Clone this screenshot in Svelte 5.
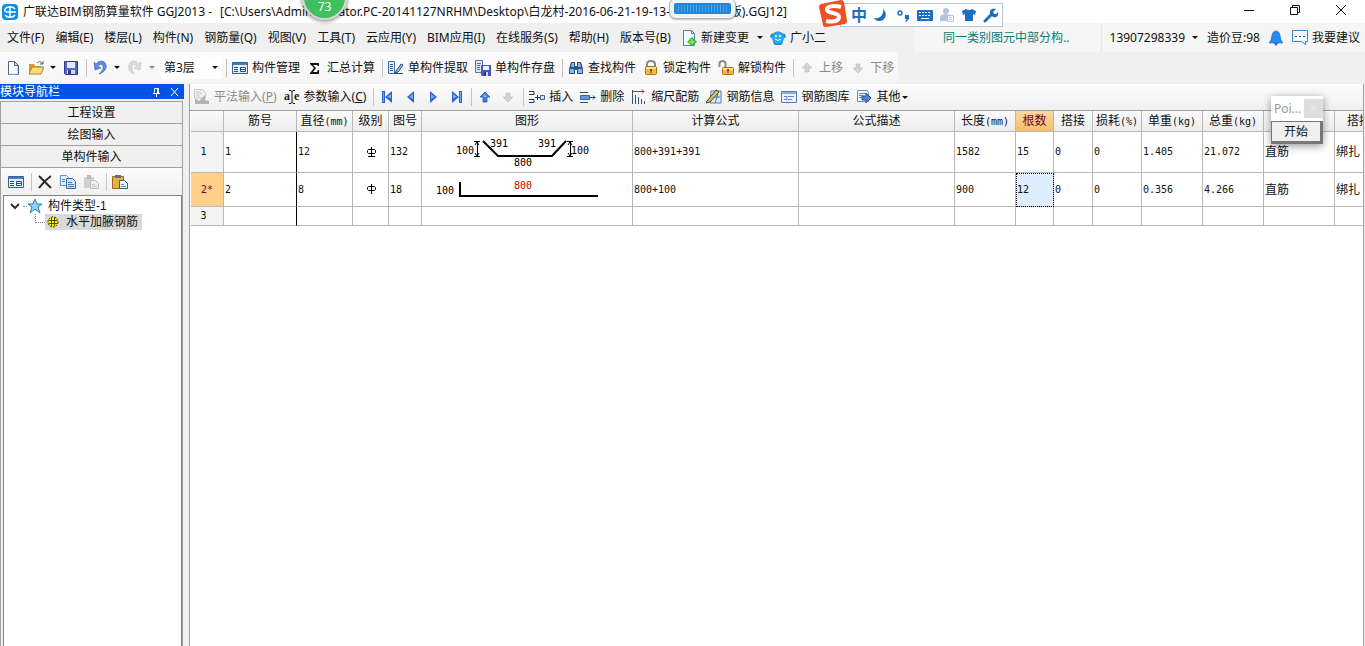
<script lang="ts">
	interface Tool {
		icon?: string;
		label?: string;
		title?: string;
		hotkey?: string;
		disabled?: boolean;
		sep?: boolean;
		arrow?: boolean;
	}

	interface Column {
		key: string;
		label: string;
		unit?: string;
		width: number;
	}

	const icons: Record<string, string> = {
		app: '<rect width="16" height="16" rx="4" fill="#0a8fe8"/><path d="M3 5C5 2 11 2 13 5M3 11c2 3 8 3 10 0M8 3v10M4 8h10M3 5v3" fill="none" stroke="#fff" stroke-width="1.500"/>',
		file: '<path d="M3.500 1.500h6l4 4v9h-10z" fill="#fff" stroke="#4d6588"/><path d="M9.500 1.500v4h4z" fill="#cfe0f3" stroke="#4d6588"/><path d="M12.500 6v8h-8" fill="none" stroke="#bccfe6"/>',
		open: '<path d="M1 4h5l1 2h6v8H1z" fill="#d59c2c"/><path d="M4 7h12l-3 7H1z" fill="#ffdc7a" stroke="#b58022"/><path d="M9 3c2-2 4-2 5 1m-2 0h3V1" fill="none" stroke="#3c6b95"/>',
		save: '<path d="M1.500 1.500h13v13h-12l-1-1z" fill="#5a66c9" stroke="#30378d"/><path d="M4 2h8v6H4z" fill="#dcecff"/><path d="M4 10h8v4H4z" fill="#d5d9ed"/><path d="M5 10h3v4H5z" fill="#343b86"/>',
		undo: '<path d="M2 2l1 8 6-2-3-2c3-3 6-1 5 2 0 2-2 4-4 6 6-2 8-6 7-9-1-5-7-5-10-1z" fill="#5b8de0" stroke="#3461b5" stroke-width=".6"/>',
		redo: '<path d="M14 2l-1 8-6-2 3-2C7 3 4 5 5 8c0 2 1 4 2 6-5-2-6-6-5-9 1-5 7-5 10-1z" fill="#dadada" stroke="#c2c2c2" stroke-width=".6"/>',
		manage: '<path d="M.5 2.500h15v11H.5z" fill="#e8f2ff" stroke="#33639f"/><path d="M1 3h14v2H1z" fill="#4979bd"/><path d="M2 7.500h4m-4 2h4m-4 2h4" stroke="#294d84"/><path d="M8.500 7.500h5v4h-5z" fill="#fff" stroke="#294d84"/><path d="M8 9.500h6" stroke="#294d84"/>',
		sum: '<path d="M3 3h9v3h-1l-1-1H6l3 3-3 4h4l1-2h1v4H3v-1l4-5-4-4z" fill="#111"/>',
		extract: '<path d="M.5 1.500h6v12h-6z" fill="#e3efff" stroke="#466da3"/><path d="M2 4.500h3m-3 2h3m-3 2h3m-3 2h3" stroke="#315991"/><path d="M6 13.500h9M8 11l5-7 2 1-5 7-3 1z" fill="#9fc0ea" stroke="#284c7e"/>',
		store: '<path d="M.5.5h7v12h-7z" fill="#dceaff" stroke="#5378ab"/><path d="M2 3.500h4M2 5.500h3M2 7.500h3M2 9.500h3" stroke="#4472ac"/><path d="M6 5h10v11H7l-1-1z" fill="#4a55b5"/><path d="M8 6h6v4H8z" fill="#eaf3ff"/><path d="M9 12h4v4H9z" fill="#d5d9ed"/><path d="M9 12h2v4H9z" fill="#30378d"/>',
		find: '<path d="M3 2h4v4h2V2h4l2 7v5H9v-4H7v4H1V9z" fill="#2e5385"/><path d="M2 9h4v4H2zm8 0h4v4h-4zM4 3h2v4H3zm6 0h2l1 4h-3z" fill="#8bb8e8"/>',
		lock: '<path d="M4 8V4c0-4 8-4 8 0v4" fill="none" stroke="#898989" stroke-width="2"/><rect x="2.500" y="6.500" width="11" height="8" rx="1" fill="#f2b941" stroke="#a8700f"/><path d="M3 8h10" stroke="#ffe492" stroke-width="2"/><path d="M8 9v4M7 10h2" stroke="#493009"/>',
		unlock: '<path d="M1.500 7V4c0-4 6-4 6 0v4" fill="none" stroke="#8c8c7d" stroke-width="2"/><rect x="4.500" y="7.500" width="11" height="7" rx="1" fill="#f2b941" stroke="#a8700f"/><path d="M5 9h10" stroke="#ffe492" stroke-width="2"/><path d="M10 9v4M9 10h2" stroke="#493009"/>',
		grayUp: '<path d="M8 3l5 5h-3v4H6V8H3z" fill="#d2d2d2" stroke="#bebebe" stroke-width=".6"/>',
		grayDown: '<path d="M8 13l5-5h-3V4H6v4H3z" fill="#d2d2d2" stroke="#bebebe" stroke-width=".6"/>',
		flat: '<path d="M.5.500h8l3 3V9h-11z" fill="#f2f2f2" stroke="#c8c8c8"/><path d="M2 3h5M2 5h6M2 7h4" stroke="#ccc"/><path d="M1 15V9l4 3 6-6v5l4 1v3z" fill="#b4b4b4"/>',
		first: '<path d="M3 2h3v12H3z" fill="#2c62ce"/><path d="M13 2v12L6 8z" fill="#2c62ce"/><path d="M12 5v4L8 8z" fill="#83b5fa"/><path d="M4 3h1v10H4z" fill="#77a9f2"/>',
		prev: '<path d="M12 2v12L5 8z" fill="#2c62ce"/><path d="M11 5v5L7 8z" fill="#78abf7"/>',
		next: '<path d="M5 2v12l7-6z" fill="#2c62ce"/><path d="M6 5v5l4-2z" fill="#78abf7"/>',
		last: '<path d="M11 2h3v12h-3z" fill="#2c62ce"/><path d="M4 2v12l7-6z" fill="#2c62ce"/><path d="M5 5v4l4-1z" fill="#83b5fa"/><path d="M12 3h1v10h-1z" fill="#77a9f2"/>',
		up: '<path d="M8 3l5 5h-3v5H6V8H3z" fill="#3f7ee8" stroke="#2556b0" stroke-width=".8"/><path d="M8 5l2 3H6z" fill="#8abaf8"/>',
		insert: '<path d="M0 2.500h5v3H0M0 13.500h5v-3H0M6 8.500h5M8.500 6v5" fill="none" stroke="#1f3654"/><path d="M11.500 6.500h4v4h-4z" fill="#d6e7f8" stroke="#3f6596"/>',
		remove: '<path d="M0 3.500h8M0 13.500h8" stroke="#314866"/><path d="M.5 6.500h9v4h-9z" fill="#5e9be6" stroke="#3468ad"/><path d="M9 8.500h6m-2-2l2 2-2 2" fill="none" stroke="#1f3d74"/>',
		scale: '<path d="M2 2.500h11m-2-2l2 2-2 2" fill="none" stroke="#9b3a3a"/><path d="M1.500 1v14m3-9v9m3-7v7m3-5v5m3-3v3" stroke="#3a5278"/>',
		info: '<path d="M5 2h10v12H4z" fill="#d8e9fc" stroke="#597ca8"/><path d="M8 8h6m-5 6l3-9" stroke="#4373ab"/><path d="M1 12L10 1l3 2-9 10-4 1z" fill="#d1bd62" stroke="#544722"/>',
		library: '<path d="M.5 2.500h15v11H.5z" fill="#eaf3ff" stroke="#5b7ca6"/><path d="M1 3h14v2H1z" fill="#8aafe0"/><path d="M3 7.500h3v3H3m4-3h6m-6 3h4" fill="none" stroke="#6487b5"/>',
		other: '<path d="M1.500 1.500h10l1 2v9h-11z" fill="#f4f8ff" stroke="#728eb5"/><path d="M3 4.500h7M3 6.500h4M3 8.500h3" stroke="#6985af"/><path d="M6 7h4V4l5 5-5 5v-3H6z" fill="#4c83db" stroke="#254f9d"/>',
		change: '<path d="M2.500.500h8l3 3v12h-11z" fill="#f0faff" stroke="#3d8dae"/><path d="M10.500.500v3h3" fill="none" stroke="#3d8dae"/><path d="M11 7l5 5-5 4-5-4z" fill="#42b829"/><path d="M11 9v5m-3-2h6" stroke="#b8ee95"/>',
		mascot: '<path d="M1 4l3-1c2-2 6-2 8 0l3 1 1 3-3 2c0 3 0 5-2 6H5c-2-1-2-3-2-6L0 7z" fill="#198bd9"/><ellipse cx="8" cy="8" rx="6" ry="6" fill="#2ba8ef"/><circle cx="6" cy="6" r="1" fill="#fff"/><circle cx="10" cy="6" r="1" fill="#fff"/><path d="M5 9q3 3 6 0" fill="none" stroke="#fff"/>',
		bell: '<path d="M8 1c4 0 4 5 5 9l2 3H1l2-3c1-4 1-9 5-9z" fill="#2788f4" stroke="#2369bd" stroke-width=".6"/><path d="M6 13h4l-2 3z" fill="#185aae"/>',
		chat: '<path d="M.5.500h15v11h-2v3l-4-3h-9z" fill="#f1faff" stroke="#3686c9"/><path d="M3 6.500h2m2 0h2m2 0h2" stroke="#14539d"/>',
		delete: '<path d="M2 2l12 12M14 2C8 6 6 9 2 14" fill="none" stroke="#292929" stroke-width="2"/>',
		copy: '<path d="M.5 1.500h6l2 2v8h-8z" fill="#e0f1ff" stroke="#5b8dc6"/><path d="M6.500 4.500h6l3 3v7h-9z" fill="#cfe4fb" stroke="#376ca8"/><path d="M8 8.500h4m-4 2h6m-6 2h6M2 5.500h3M2 7.500h3" stroke="#4379ba"/>',
		pasteGray: '<path d="M1 3h10v11H1z" fill="#d1d1d1"/><path d="M4 1h4v4H4z" fill="#bababa"/><path d="M7.500 6.500h5l3 3v5h-8z" fill="#efefef" stroke="#bdbdbd"/><path d="M9 10.500h3m-3 2h5" stroke="#c4c4c4"/>',
		paste: '<path d="M.5 2.500h11v12H.5z" fill="#e9b13b" stroke="#956c20"/><path d="M3 1h6v3H3z" fill="#6a6d73"/><path d="M7.500 6.500h5l3 3v5h-8z" fill="#e9f5ff" stroke="#365f91"/><path d="M9 10.500h3m-3 2h5" stroke="#5a8fc7"/>',
		star: '<path d="M8 1l2 5h5l-4 3 2 6-5-4-5 4 2-6-4-3h5z" fill="#8fd4ff" stroke="#2d80c2"/>',
		gear: '<circle cx="8" cy="8" r="5" fill="#fff200" stroke="#333000" stroke-dasharray="2 1"/><path d="M6.500 4v8m3-8v8M4 6.500h8m-8 3h8" stroke="#4d4900"/><path d="M7 7h2v2H7z" fill="#fff200"/>'
	};

	const titleParts = [
		'广联达BIM钢筋算量软件 GGJ2013 -',
		'[C:\\Users\\Admini',
		'strator.PC-20141127NRHM\\Desktop\\白龙村-2016-06-21-19-13-068(2013',
		'版).GGJ12]'
	];

	const menus = ['文件(F)', '编辑(E)', '楼层(L)', '构件(N)', '钢筋量(Q)', '视图(V)', '工具(T)', '云应用(Y)', 'BIM应用(I)', '在线服务(S)', '帮助(H)', '版本号(B)'];

	const mainTools: Tool[] = [
		{ icon: 'manage', label: '构件管理' },
		{ icon: 'sum', label: '汇总计算' },
		{ sep: true },
		{ icon: 'extract', label: '单构件提取' },
		{ icon: 'store', label: '单构件存盘' },
		{ sep: true },
		{ icon: 'find', label: '查找构件' },
		{ icon: 'lock', label: '锁定构件' },
		{ icon: 'unlock', label: '解锁构件' },
		{ sep: true },
		{ icon: 'grayUp', label: '上移', disabled: true },
		{ icon: 'grayDown', label: '下移', disabled: true }
	];

	const editTools: Tool[] = [
		{ icon: 'flat', label: '平法输入', hotkey: 'P', disabled: true },
		{ icon: 'param', label: '参数输入', hotkey: 'C' },
		{ sep: true },
		{ icon: 'first', title: '首行' },
		{ icon: 'prev', title: '上一行' },
		{ icon: 'next', title: '下一行' },
		{ icon: 'last', title: '末行' },
		{ sep: true },
		{ icon: 'up', title: '上移' },
		{ icon: 'grayDown', title: '下移', disabled: true },
		{ sep: true },
		{ icon: 'insert', label: '插入' },
		{ icon: 'remove', label: '删除' },
		{ icon: 'scale', label: '缩尺配筋' },
		{ icon: 'info', label: '钢筋信息' },
		{ icon: 'library', label: '钢筋图库' },
		{ icon: 'other', label: '其他', arrow: true }
	];

	const columns: Column[] = [
		{ key: 'no', label: '筋号', width: 73 },
		{ key: 'dia', label: '直径', unit: '(mm)', width: 56 },
		{ key: 'grade', label: '级别', width: 36 },
		{ key: 'fig', label: '图号', width: 33 },
		{ key: 'shape', label: '图形', width: 211 },
		{ key: 'formula', label: '计算公式', width: 166 },
		{ key: 'desc', label: '公式描述', width: 156 },
		{ key: 'len', label: '长度', unit: '(mm)', width: 61 },
		{ key: 'count', label: '根数', width: 38 },
		{ key: 'lap', label: '搭接', width: 39 },
		{ key: 'loss', label: '损耗', unit: '(%)', width: 49 },
		{ key: 'unit', label: '单重', unit: '(kg)', width: 61 },
		{ key: 'total', label: '总重', unit: '(kg)', width: 61 },
		{ key: 'kind', label: '', width: 71 },
		{ key: 'joint', label: '搭接形式', width: 73 }
	];

	const rows: Record<string, string>[] = [
		{ no: '1', dia: '12', grade: 'two', fig: '132', shape: 'trough', formula: '800+391+391', len: '1582', count: '15', lap: '0', loss: '0', unit: '1.405', total: '21.072', kind: '直筋', joint: '绑扎' },
		{ no: '2', dia: '8', grade: 'one', fig: '18', shape: 'hook', formula: '800+100', len: '900', count: '12', lap: '0', loss: '0', unit: '0.356', total: '4.266', kind: '直筋', joint: '绑扎' },
		{}
	];
	const heights = [41, 34, 19];
	const tableWidth = 33 + columns.reduce((sum, c) => sum + c.width, 0);

	let floor = $state('第3层');
	let activeRow = $state(1);
	let activeCol = $state('count');
</script>

{#snippet icon(name: string)}
	{#if name === 'param'}
		<svg class="icon" viewBox="0 0 16 16" aria-hidden="true">
			<text x="0" y="11" font-family="Liberation Serif, serif" font-size="12" font-weight="bold" fill="#222">a</text>
			<text x="10" y="11" font-family="Liberation Serif, serif" font-size="12" font-weight="bold" fill="#222">e</text>
			<path d="M5 1.500h2l1 1 1-1h2M8 2v12M5 14.500h2l1-1 1 1h2" fill="none" stroke="#111" />
		</svg>
	{:else}
		<svg class="icon" viewBox="0 0 16 16" aria-hidden="true">{@html icons[name]}</svg>
	{/if}
{/snippet}

{#snippet toolButton(tool: Tool)}
	{#if tool.sep}
		<span class="sep"></span>
	{:else}
		<button class="tool" disabled={tool.disabled} aria-label={tool.label ?? tool.title}>
			{#if tool.icon}{@render icon(tool.icon)}{/if}
			{#if tool.label}
				<span>{tool.label}{#if tool.hotkey}(<u>{tool.hotkey}</u>){/if}</span>
			{/if}
			{#if tool.arrow}<i class="arrow close"></i>{/if}
		</button>
	{/if}
{/snippet}

{#snippet shape(kind: string)}
	{#if kind === 'trough'}
		<svg class="shape" width="210" height="40" viewBox="0 0 210 40">
			<path d="M61 9l15 15h54l14-15" fill="none" stroke="#000" stroke-width="2" />
			<path d="M52 9.500h6M52 24.500h6M55.500 10v14M53 13l2-3 2 3M53 21l2 3 2-3M145 9.500h6M145 24.500h6M148.500 10v14M146 13l2-3 2 3M146 21l2 3 2-3" fill="none" stroke="#000" />
			<text x="34" y="22">100</text>
			<text x="68" y="15">391</text>
			<text x="116" y="15">391</text>
			<text x="149" y="22">100</text>
			<text x="92" y="34">800</text>
		</svg>
	{:else}
		<svg class="shape" width="210" height="33" viewBox="0 0 210 33">
			<path d="M38 9v14h138" fill="none" stroke="#000" stroke-width="2" />
			<text x="14" y="21">100</text>
			<text x="92" y="16" class="red">800</text>
		</svg>
	{/if}
{/snippet}

<div class="window">
	<header class="titlebar">
		{@render icon('app')}
		<h1>
			{#each titleParts as part}
				<span>{part}</span>
			{/each}
		</h1>
		<div class="window-buttons">
			<button aria-label="最小化"><svg width="12" height="12"><path d="M1 6.500h10" /></svg></button>
			<button aria-label="还原"><svg width="12" height="12"><path d="M1.500 3.500h7v7h-7zM3.500 3V1.500h7v7H9" /></svg></button>
			<button aria-label="关闭"><svg width="12" height="12"><path d="M1 1l10 10M11 1L1 11" /></svg></button>
		</div>
	</header>

	<nav class="menubar">
		{#each menus as menu (menu)}
			<button>{menu}</button>
		{/each}
		<button class="with-icon change">{@render icon('change')}新建变更<i class="arrow"></i></button>
		<button class="with-icon mascot">{@render icon('mascot')}广小二</button>
		<div class="account">
			<a class="notice" href="#notice">同一类别图元中部分构..</a>
			<button class="phone">13907298339<i class="arrow"></i></button>
			<span class="beans">造价豆:98</span>
			<button aria-label="消息">{@render icon('bell')}</button>
			<button class="with-icon suggest">{@render icon('chat')}我要建议</button>
		</div>
	</nav>

	<div class="main-tools">
		<div class="strip">
			<button class="tool" aria-label="新建">{@render icon('file')}</button>
			<button class="tool" aria-label="打开">{@render icon('open')}<i class="arrow"></i></button>
			<button class="tool" aria-label="保存">{@render icon('save')}</button>
			<span class="sep"></span>
			<button class="tool" aria-label="撤销">{@render icon('undo')}<i class="arrow"></i></button>
			<button class="tool" aria-label="恢复" disabled>{@render icon('redo')}<i class="arrow"></i></button>
			<label class="floor">
				<select bind:value={floor} aria-label="楼层">
					<option>第1层</option>
					<option>第2层</option>
					<option>第3层</option>
				</select>
				<i class="arrow"></i>
			</label>
			<span class="sep"></span>
			{#each mainTools as tool}
				{@render toolButton(tool)}
			{/each}
		</div>
	</div>

	<div class="body">
		<aside class="sidebar">
			<div class="side-title">
				<h2>模块导航栏</h2>
				<button aria-label="固定"><svg width="9" height="10"><path d="M2.500 6V1.500h4V6M5.500 1v5M1 6.500h7M4.500 7v3" /></svg></button>
				<button aria-label="关闭"><svg width="9" height="10"><path d="M1 1l7 8M8 1L1 9" /></svg></button>
			</div>
			<button class="module">工程设置</button>
			<button class="module">绘图输入</button>
			<button class="module">单构件输入</button>
			<div class="side-panel">
				<div class="side-tools">
					<button class="tool" aria-label="构件管理">{@render icon('manage')}</button>
					<span class="sep"></span>
					<button class="tool" aria-label="删除">{@render icon('delete')}</button>
					<button class="tool" aria-label="复制">{@render icon('copy')}</button>
					<button class="tool" aria-label="粘贴" disabled>{@render icon('pasteGray')}</button>
					<span class="sep"></span>
					<button class="tool" aria-label="粘贴构件">{@render icon('paste')}</button>
				</div>
				<ul class="tree">
					<li>
						<svg class="chevron" width="10" height="8"><path d="M1 2l4 4 4-4" /></svg>
						<i class="dots"></i>
						{@render icon('star')}
						<span>构件类型-1</span>
					</li>
					<li class="leaf">
						<i class="elbow"></i>
						<button>{@render icon('gear')}<span>水平加腋钢筋</span></button>
					</li>
				</ul>
			</div>
		</aside>

		<main class="content">
			<div class="edit-tools">
				{#each editTools as tool}
					{@render toolButton(tool)}
				{/each}
			</div>
			<div class="grid">
				<table style="width: {tableWidth}px">
					<colgroup>
						<col style="width: 33px" />
						{#each columns as col (col.key)}
							<col style="width: {col.width}px" />
						{/each}
					</colgroup>
					<thead>
						<tr>
							<th aria-label="行号"></th>
							{#each columns as col (col.key)}
								<th class:active={col.key === activeCol}>{col.label}{#if col.unit}<span class="num">{col.unit}</span>{/if}</th>
							{/each}
						</tr>
					</thead>
					<tbody>
						{#each rows as row, i}
							<tr style="height: {heights[i]}px">
								<th class="num" class:active={i === activeRow}>{i + 1}{i === activeRow ? '*' : ''}</th>
								{#each columns as col (col.key)}
									<td
										class={col.key}
										class:focused={i === activeRow && col.key === activeCol}
										onclick={() => {
											activeRow = i;
											activeCol = col.key;
										}}
									>
										{#if col.key === 'shape' && row.shape}
											{@render shape(row.shape)}
										{:else if col.key === 'grade' && row.grade}
											<svg class="grade-mark" width="9" height="11" role="img" aria-label="钢筋级别">
												<path d="M4.500 0v10M1.500 2.500h6l1 1v2l-1 1h-6l-1-1v-2z" />
												{#if row.grade === 'two'}<path d="M1 9.500h7" />{/if}
											</svg>
										{:else}
											{row[col.key] ?? ''}
										{/if}
									</td>
								{/each}
							</tr>
						{/each}
					</tbody>
				</table>
			</div>
		</main>
	</div>

	<div class="speed-ball">73</div>
	<div class="net-meter"><span></span></div>

	<div class="ime">
		<svg class="ime-logo" width="30" height="28" viewBox="0 0 30 28">
			<path d="M3 4L23 0q2 0 3 2l3 19q0 2-2 3L8 27q-3 0-3-2L1 7q0-2 2-3z" fill="#f04e23" />
			<path d="M23 7C17 5 8 6 9 10s12 2 12 7-8 5-13 4" fill="none" stroke="#fff" stroke-width="4" />
		</svg>
		<div class="ime-bar">
			<button class="ime-lang">中</button>
			<button aria-label="半角"><svg width="16" height="16"><path d="M10 2c5 4 3 12-4 12-2 0-4-1-5-3 6 1 10-3 9-9z" fill="#1c6fc0" /></svg></button>
			<button aria-label="标点"><svg width="16" height="16"><circle cx="5" cy="6" r="2" fill="none" stroke="#1c6fc0" stroke-width="1.500" /><path d="M10 8h4v4l-3 3-1-1 2-2h-2z" fill="#1c6fc0" /></svg></button>
			<button aria-label="软键盘"><svg width="16" height="16"><rect y="3" width="16" height="11" rx="1" fill="#1c6fc0" /><path d="M2 5.500h12M2 8.500h12" stroke="#fff" stroke-dasharray="2 1" /><path d="M4 11.500h8" stroke="#fff" /></svg></button>
			<button aria-label="用户"><svg width="16" height="16"><circle cx="7" cy="4" r="3" fill="#b5c3d6" /><path d="M1 14V9q6-4 12 0v5z" fill="#b5c3d6" /><path d="M8.500 8.500h6v6h-6z" fill="#fff" stroke="#b5c3d6" /><path d="M10 10.500h3m-3 2h3" stroke="#b5c3d6" /></svg></button>
			<button aria-label="皮肤"><svg width="16" height="16"><path d="M5 2q3 2 6 0l4 2-1 4-2-1v7H4V7L2 8 1 4z" fill="#1c6fc0" /></svg></button>
			<button aria-label="工具箱"><svg width="16" height="16"><path d="M2 14l7-7" stroke="#1c6fc0" stroke-width="3" stroke-linecap="round" /><path d="M13 2l-3 3 1 2 2 0 2-2c1 4-2 6-5 5L7 7c-1-4 2-6 6-5z" fill="#1c6fc0" /></svg></button>
		</div>
	</div>

	<div class="popup">
		<div class="popup-title"><span>Poi...</span><button aria-label="关闭">×</button></div>
		<button class="start">开始</button>
	</div>
</div>

<style>
	:global(body) {
		margin: 0;
		background: #f0f0f0;
	}

	.window {
		position: relative;
		display: flex;
		flex-direction: column;
		min-height: 100vh;
		overflow: hidden;
		color: #111;
		font: 12px/16px 'Noto Sans', 'Noto Sans CJK SC', sans-serif;
	}

	button {
		display: flex;
		align-items: center;
		padding: 0;
		border: 0;
		background: none;
		color: inherit;
		font: inherit;
		white-space: nowrap;
	}

	h1,
	h2 {
		margin: 0;
		font: inherit;
		white-space: nowrap;
	}

	h1 {
		display: flex;
		gap: 8px;
	}

	svg {
		display: block;
		flex: none;
	}

	.icon {
		width: 16px;
		height: 16px;
	}

	.arrow {
		flex: none;
		margin: 0 0 0 7px;
		border: 3px solid transparent;
		border-top-color: currentColor;
		border-bottom: 0;
	}

	.titlebar {
		display: flex;
		align-items: center;
		gap: 5px;
		height: 23px;
		padding-left: 2px;
		background: #fff;
	}

	.window-buttons {
		display: flex;
		gap: 34px;
		margin: 0 18px 4px auto;
	}

	.window-buttons path,
	.side-title path {
		fill: none;
		stroke: currentColor;
	}

	.menubar {
		display: flex;
		align-items: center;
		gap: 11px;
		height: 29px;
		padding-left: 7px;
	}

	.with-icon {
		gap: 4px;
	}

	.with-icon .arrow {
		margin-left: 4px;
	}

	.change {
		margin-left: -1px;
	}

	.mascot {
		margin-left: -4px;
	}

	.account {
		display: flex;
		align-items: center;
		align-self: stretch;
		gap: 8px;
		margin-left: auto;
		padding-right: 5px;
		background: #f5f5f5;
	}

	.notice {
		display: flex;
		align-items: center;
		align-self: stretch;
		padding: 0 31px 0 29px;
		border-right: 1px solid #e6e6e6;
		color: #0b7a75;
		text-decoration: none;
	}

	.phone {
		margin-right: 1px;
	}

	.beans {
		white-space: nowrap;
	}

	.main-tools {
		display: flex;
		height: 31px;
		margin-bottom: 1px;
	}

	.strip {
		display: flex;
		align-items: center;
		padding: 0 1px;
		border-radius: 0 4px 4px 0;
		background: linear-gradient(#fcfcfc, #f5f5f5);
	}

	.tool {
		gap: 4px;
		height: 22px;
		padding: 0 3px 0 4px;
	}

	.tool .arrow {
		margin-left: 2px;
	}

	.tool .arrow.close {
		margin-left: -2px;
	}

	.tool:disabled {
		color: #8a8a8a;
	}

	.sep {
		flex: none;
		width: 1px;
		height: 18px;
		margin: 0 1px 0 4px;
		background: #c4c4c4;
	}

	.floor {
		display: flex;
		align-items: center;
		width: 61px;
		height: 22px;
		margin-left: 3px;
		background: #fff;
	}

	.floor select {
		width: 48px;
		padding: 0 0 0 3px;
		border: 0;
		appearance: none;
		background: none;
		color: inherit;
		font: inherit;
	}

	.floor .arrow {
		margin-left: 3px;
	}

	.body {
		display: flex;
		flex: 1;
	}

	.sidebar {
		display: flex;
		flex: none;
		flex-direction: column;
		width: 184px;
		font-family: 'Liberation Sans', 'Noto Sans CJK SC', sans-serif;
	}

	.side-title {
		display: flex;
		align-items: center;
		gap: 9px;
		height: 15px;
		margin-bottom: 2px;
		padding-right: 5px;
		background: #0054e3;
		color: #fff;
	}

	.side-title h2 {
		margin-right: auto;
	}

	.module {
		justify-content: center;
		width: 183px;
		height: 22px;
		border: 1px solid #a0a0a0;
		border-bottom-width: 0;
		background: #f0f0f0;
	}

	.side-panel {
		display: flex;
		flex: 1;
		flex-direction: column;
		margin-right: 1px;
		border: solid #a0a0a0;
		border-width: 1px 1px 0 1px;
	}

	.side-tools {
		display: flex;
		align-items: center;
		height: 27px;
		padding-left: 3px;
		background: linear-gradient(#fcfcfc, #f0f0f0);
	}

	.tree {
		flex: 1;
		margin: 0 0 0 2px;
		padding: 2px 0 0 5px;
		border: solid #828282;
		border-width: 1px 1px 0 1px;
		background: #fff;
		list-style: none;
	}

	.tree li {
		display: flex;
		align-items: center;
		height: 16px;
	}

	.tree li > span {
		margin-left: 5px;
	}

	.chevron {
		margin: 0 3px 0 1px;
	}

	.chevron path {
		fill: none;
		stroke: #333;
		stroke-width: 2;
	}

	.dots {
		width: 4px;
		border-top: 1px dotted #888;
	}

	.elbow {
		width: 9px;
		height: 8px;
		margin: -8px 0 0 26px;
		border: dotted #888;
		border-width: 0 0 1px 1px;
	}

	.leaf button {
		gap: 5px;
		height: 16px;
		padding-right: 4px;
		background: #d9d9d9;
	}

	.content {
		display: flex;
		flex: 1;
		flex-direction: column;
		min-width: 0;
		margin: 0 1px 0 5px;
		border: solid #a0a0a0;
		border-width: 0 1px 0 1px;
		background: #fff;
	}

	.edit-tools {
		display: flex;
		align-items: center;
		height: 26px;
		border-bottom: 1px solid #a0a0a0;
		background: linear-gradient(#fdfdfd, #f0f0f0);
	}

	.grid {
		overflow: hidden;
		padding-left: 1px;
	}

	table {
		border-collapse: separate;
		border-spacing: 0;
		table-layout: fixed;
	}

	th,
	td {
		box-sizing: border-box;
		overflow: hidden;
		padding: 0;
		border: solid #b8b8b8;
		border-width: 0 1px 1px 0;
		font-weight: normal;
		white-space: nowrap;
	}

	td {
		padding-left: 1px;
		font: 10px/16px 'DejaVu Sans Mono', 'Noto Sans CJK SC', monospace;
	}

	.num {
		font: 10px/16px 'DejaVu Sans Mono', monospace;
	}

	thead tr {
		height: 21px;
	}

	th {
		background: linear-gradient(#fbfbfb, #ececec);
	}

	tbody th {
		padding-right: 7px;
		background: #f3f3f3;
	}

	thead th.active {
		background: linear-gradient(#fbd9a0, #f5c068);
		color: #7a0026;
	}

	tbody th.active {
		padding-right: 0;
		background: #ffd08a;
		color: #7a0026;
	}

	td.no {
		border-right-color: #000;
	}

	td.kind,
	td.joint {
		font-size: 12px;
	}

	td.shape {
		padding: 0;
	}

	td.focused {
		background: #ddecff;
		outline: 1px dotted #000;
		outline-offset: -1px;
	}

	.shape text {
		fill: #000;
		font: 10px 'DejaVu Sans Mono', monospace;
	}

	.shape text.red {
		fill: #d00000;
	}

	.grade-mark {
		margin: auto;
		fill: none;
		stroke: #000;
	}

	.speed-ball {
		position: absolute;
		top: -25px;
		left: 302px;
		box-sizing: border-box;
		width: 45px;
		height: 45px;
		padding-top: 22px;
		border: 2px solid #d8d8d8;
		border-radius: 50%;
		background: #3fc05f;
		box-shadow: 0 1px 4px #0008;
		color: #fff;
		text-align: center;
	}

	.net-meter {
		position: absolute;
		top: -2px;
		left: 669px;
		padding: 4px;
		border: 1px solid #b5b5b5;
		border-radius: 7px;
		background: #f4f4f4;
		box-shadow: 0 1px 2px #0004;
	}

	.net-meter span {
		display: block;
		box-sizing: border-box;
		width: 57px;
		height: 11px;
		border: 2px solid #2387d6;
		border-radius: 2px;
		background: repeating-linear-gradient(90deg, #2387d6 0 2px, #4fa3e2 2px 3px);
	}

	.ime {
		position: absolute;
		top: 0;
		left: 818px;
		display: flex;
	}

	.ime-logo {
		z-index: 1;
	}

	.ime-bar {
		display: flex;
		align-items: center;
		gap: 6px;
		box-sizing: border-box;
		height: 24px;
		margin: 3px 0 0 -8px;
		padding: 0 3px 0 10px;
		border: 1px solid #b4c6dc;
		background: #fff;
	}

	.ime-lang {
		width: 16px;
		color: #1c6fc0;
		font-size: 16px;
		font-weight: bold;
	}

	.popup {
		position: absolute;
		top: 96px;
		right: 42px;
		width: 52px;
		background: #fff;
		box-shadow: 0 2px 8px #0006;
	}

	.popup-title {
		display: flex;
		align-items: center;
		justify-content: space-between;
		height: 25px;
		padding-left: 3px;
		color: #999;
	}

	.popup-title button {
		justify-content: center;
		width: 19px;
		height: 19px;
		background: #dedede;
		color: #eee;
	}

	.start {
		justify-content: center;
		width: 52px;
		height: 23px;
		border: 1px solid #777;
		border-width: 1px 3px 3px 1px;
		background: #f0f0f0;
	}
</style>
